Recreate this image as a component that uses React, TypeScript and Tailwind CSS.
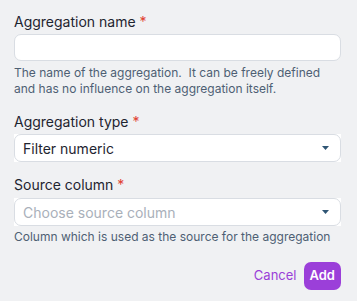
function Caret() {
  return (
    <svg width="7" height="4" viewBox="0 0 7 4" className="shrink-0">
      <path d="M0 0 H7 L3.5 4 Z" fill="#2f5574" />
    </svg>
  );
}

function Label({ text }: { text: string }) {
  return (
    <label className="block text-[14px] leading-5 text-[#1e2430]">
      {text} <span className="text-[#e0402f]">*</span>
    </label>
  );
}

export default function App() {
  return (
    <div
      className="w-[357px] h-[301px] bg-[#f0f1f3] px-[14px] pt-[12px]"
      style={{ fontFamily: "Inter, 'Noto Sans', sans-serif" }}
    >
      <div>
        <Label text="Aggregation name" />
        <input
          type="text"
          className="mt-[2px] block w-[327px] h-[27px] rounded-[7px] border border-[#d9dde3] bg-white px-2 outline-none"
        />
        <p className="mt-[4px] text-[12px] leading-4 text-[#4e5f73]">
          The name of the aggregation.{"\u00a0"} It can be freely defined
          <br />
          and has no influence on the aggregation itself.
        </p>
      </div>

      <div className="mt-[15px]">
        <Label text="Aggregation type" />
        <div className="mt-[2px] w-[327px] h-[28px] bg-white">
          <div className="h-full rounded-[7px] border border-[#d9dde3] flex items-center justify-between pl-[8px] pr-[11px]">
            <span className="text-[14px] text-[#1e2430]">Filter numeric</span>
            <Caret />
          </div>
        </div>
      </div>

      <div className="mt-[13px]">
        <Label text="Source column" />
        <div className="mt-[3px] w-[327px] h-[28px] bg-white">
          <div className="h-full rounded-[7px] border border-[#d9dde3] flex items-center justify-between pl-[8px] pr-[11px]">
            <span className="text-[14px] text-[#a9b0ba]">Choose source column</span>
            <Caret />
          </div>
        </div>
        <p className="mt-[3px] text-[12px] leading-4 text-[#4e5f73]">
          Column which is used as the source for the aggregation
        </p>
      </div>

      <div className="mt-[17px] w-[327px] flex justify-end items-center gap-[7px]">
        <button className="text-[13px] text-[#9a3fd8]">Cancel</button>
        <button className="h-[28px] px-[6px] rounded-[7px] bg-[#9b3fd9] text-white text-[13px] font-semibold">
          Add
        </button>
      </div>
    </div>
  );
}
